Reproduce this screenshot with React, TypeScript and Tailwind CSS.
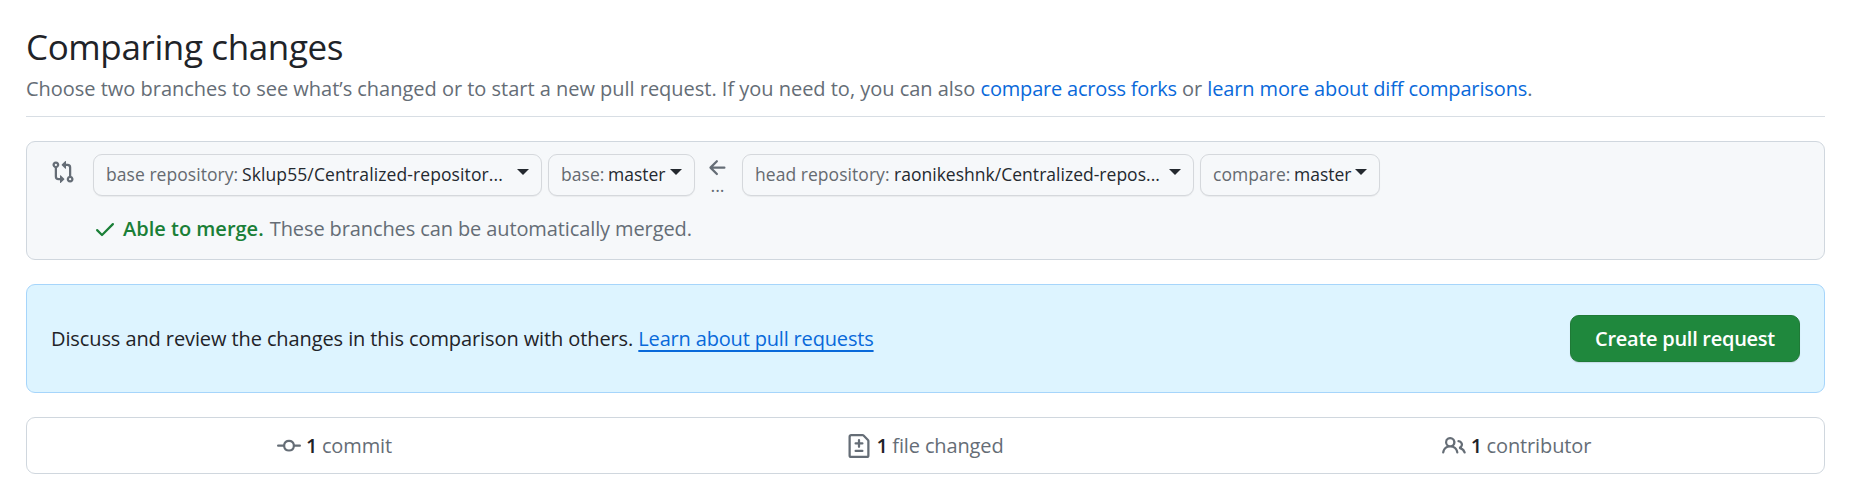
import type { ReactNode } from 'react';

const ICONS = {
  compare:
    'M9.573.677A.25.25 0 0 1 10 .854V2.5h1A2.5 2.5 0 0 1 13.5 5v5.628a2.251 2.251 0 1 1-1.5 0V5a1 1 0 0 0-1-1h-1v1.646a.25.25 0 0 1-.427.177L7.177 3.427a.25.25 0 0 1 0-.354ZM6 12v-1.646a.25.25 0 0 1 .427-.177l2.396 2.396a.25.25 0 0 1 0 .354l-2.396 2.396A.25.25 0 0 1 6 15.146V13.5H5A2.5 2.5 0 0 1 2.5 11V5.372a2.25 2.25 0 1 1 1.5 0V11a1 1 0 0 0 1 1ZM4 3.25a.75.75 0 1 0-1.5 0 .75.75 0 0 0 1.5 0ZM12.75 12a.75.75 0 1 0 0 1.5.75.75 0 0 0 0-1.5Z',
  arrowLeft:
    'M7.78 12.53a.75.75 0 0 1-1.06 0L2.47 8.28a.75.75 0 0 1 0-1.06l4.25-4.25a.751.751 0 0 1 1.042.018.751.751 0 0 1 .018 1.042L4.81 7h7.44a.75.75 0 0 1 0 1.5H4.81l2.97 2.97a.75.75 0 0 1 0 1.06Z',
  check:
    'M13.78 4.22a.75.75 0 0 1 0 1.06l-7.25 7.25a.75.75 0 0 1-1.06 0L2.22 9.28a.751.751 0 0 1 .018-1.042.751.751 0 0 1 1.042-.018L6 10.94l6.72-6.72a.75.75 0 0 1 1.06 0Z',
  commit:
    'M11.93 8.5a4.002 4.002 0 0 1-7.86 0H.75a.75.75 0 0 1 0-1.5h3.32a4.002 4.002 0 0 1 7.86 0h3.32a.75.75 0 0 1 0 1.5Zm-1.43-.75a2.5 2.5 0 1 0-5 0 2.5 2.5 0 0 0 5 0Z',
  fileDiff:
    'M1 1.75C1 .784 1.784 0 2.75 0h7.586c.464 0 .909.184 1.237.513l2.914 2.914c.329.328.513.773.513 1.237v9.586A1.75 1.75 0 0 1 13.25 16H2.75A1.75 1.75 0 0 1 1 14.25Zm1.75-.25a.25.25 0 0 0-.25.25v12.5c0 .138.112.25.25.25h10.5a.25.25 0 0 0 .25-.25V4.664a.25.25 0 0 0-.073-.177l-2.914-2.914a.25.25 0 0 0-.177-.073ZM8 3.25a.75.75 0 0 1 .75.75v1.5h1.5a.75.75 0 0 1 0 1.5h-1.5v1.5a.75.75 0 0 1-1.5 0V7h-1.5a.75.75 0 0 1 0-1.5h1.5V4A.75.75 0 0 1 8 3.25Zm-3 8a.75.75 0 0 1 .75-.75h4.5a.75.75 0 0 1 0 1.5h-4.5a.75.75 0 0 1-.75-.75Z',
  people:
    'M2 5.5a3.5 3.5 0 1 1 5.898 2.549 5.508 5.508 0 0 1 3.034 4.084.75.75 0 1 1-1.482.235 4 4 0 0 0-7.9 0 .75.75 0 0 1-1.482-.236A5.507 5.507 0 0 1 3.102 8.05 3.493 3.493 0 0 1 2 5.5ZM11 4a3.001 3.001 0 0 1 2.22 5.018 5.01 5.01 0 0 1 2.56 3.012.749.749 0 0 1-.885.954.752.752 0 0 1-.549-.514 3.507 3.507 0 0 0-2.522-2.372.75.75 0 0 1-.574-.73v-.352a.75.75 0 0 1 .416-.672A1.5 1.5 0 0 0 11 5.5.75.75 0 0 1 11 4Zm-5.5-.5a2 2 0 1 0-.001 3.999A2 2 0 0 0 5.5 3.5Z',
};

function Icon({ name, className = '' }: { name: keyof typeof ICONS; className?: string }) {
  return (
    <svg viewBox="0 0 16 16" className={`size-6 shrink-0 fill-current ${className}`} aria-hidden="true">
      <path d={ICONS[name]} />
    </svg>
  );
}

function Picker({ label, value, className, valueClass, labelClass = '' }: {
  label: string;
  value: string;
  className: string;
  valueClass: string;
  labelClass?: string;
}) {
  return (
    <button
      type="button"
      className={`flex h-[42px] shrink-0 items-start rounded-[9px] border border-[#d5d8dc] bg-[#f6f8fa] pt-[6px] pl-[12px] text-[17.5px] leading-[27px] whitespace-nowrap shadow-[0_1px_1px_rgba(31,35,40,0.06)] ${className}`}
    >
      <span className={`shrink-0 text-left tracking-[0.05px] text-[#656a70] ${labelClass}`}>{label}</span>
      <span className={`shrink-0 text-left font-medium text-[#24292f] ${valueClass}`}>{value}</span>
      <svg viewBox="0 0 12 6" className="mt-[8px] h-[6px] w-[12px] shrink-0 fill-[#24292f]" aria-hidden="true">
        <path d="M0 0h12L6 6z" />
      </svg>
    </button>
  );
}

function Stat({ icon, children }: { icon: keyof typeof ICONS; children: ReactNode }) {
  return (
    <li className="flex flex-1 items-center justify-center whitespace-nowrap text-[#656d76]">
      <Icon name={icon} className="mt-px mr-[5px]" />
      <span className="mr-[5px] font-semibold text-[#1f2328] tracking-[-0.6px]">1</span>
      <span className="tracking-[-0.13px]">{children}</span>
    </li>
  );
}

export default function App() {
  return (
    <main className="h-[488px] w-[1860px] overflow-hidden bg-white pt-[23px] pr-[35px] pl-[26px] font-['Open_Sans','Noto_Sans',sans-serif] text-[20px] leading-[30px] text-[#1f2328]">
      <header className="h-[94px] border-b border-[#d8dee4]">
        <h1 className="text-[35px] leading-[48px] font-normal tracking-[-0.38px]">Comparing changes</h1>
        <p className="mt-[3px] whitespace-nowrap text-[#656d76] tracking-[-0.02px]">
          Choose two branches to see what’s changed or to start a new pull request. If you need to, you can also{' '}
          <a className="text-[#0969da] tracking-[-0.2px]">compare across forks</a> or{' '}
          <a className="text-[#0969da] tracking-[-0.13px]">learn more about diff comparisons</a>.
        </p>
      </header>

      <section className="mt-[24px] flex h-[119px] rounded-[9px] border border-[#d0d7de] bg-[#f6f8fa] pl-[24px]">
        <Icon name="compare" className="mt-[18px] mr-[18px] text-[#656d76]" />
        <div className="pt-[12px]">
          <div className="flex">
            <Picker label="base repository:" value="Sklup55/Centralized-repositor..." className="w-[449px]" labelClass="w-[136px]" valueClass="w-[275px] tracking-[0.1px]" />
            <Picker label="base:" value="master" className="ml-[6px] w-[147px]" labelClass="w-[47px]" valueClass="w-[62px]" />
            <div className="flex w-[47px] flex-col items-center pt-[2px] pr-[2px] text-[#656d76]">
              <Icon name="arrowLeft" />
              <span className="mt-[-5px] text-[18px] leading-[20px]">...</span>
            </div>
            <Picker label="head repository:" value="raonikeshnk/Centralized-repos..." className="w-[452px]" labelClass="w-[139px]" valueClass="w-[275px] tracking-[0.02px]" />
            <Picker label="compare:" value="master" className="ml-[6px] w-[180px]" labelClass="w-[81px]" valueClass="w-[61px]" />
          </div>
          <div className="mt-[18px] flex items-start">
            <Icon name="check" className="mt-[3px] mr-[6px] text-[#1a7f37]" />
            <p className="whitespace-nowrap text-[#656d76]">
              <strong className="mr-px font-semibold text-[#1a7f37]">Able to merge.</strong>{' '}
              <span className="tracking-[-0.11px]">These branches can be automatically merged.</span>
            </p>
          </div>
        </div>
      </section>

      <section className="mt-[24px] flex h-[109px] items-center justify-between rounded-[9px] border border-[#a6d5fb] bg-[#ddf4ff] pr-[24px] pl-[24px]">
        <p className="whitespace-nowrap tracking-[-0.1px]">
          Discuss and review the changes in this comparison with others.{' '}
          <a className="text-[#0969da] tracking-[-0.17px] underline decoration-[#0969da] decoration-2 underline-offset-[4px] [text-decoration-skip-ink:none]">
            Learn about pull requests
          </a>
        </p>
        <button
          type="button"
          className="h-[47px] w-[230px] rounded-[9px] border border-[#1f7a37] bg-[#1f883d] font-semibold whitespace-nowrap text-white shadow-[0_1px_1px_rgba(31,35,40,0.12)] tracking-[-0.27px]"
        >
          Create pull request
        </button>
      </section>

      <ul className="mt-[24px] flex h-[57px] rounded-[9px] border border-[#d0d7de] px-[12px]">
        <Stat icon="commit">commit</Stat>
        <Stat icon="fileDiff">file changed</Stat>
        <Stat icon="people">contributor</Stat>
      </ul>
    </main>
  );
}
